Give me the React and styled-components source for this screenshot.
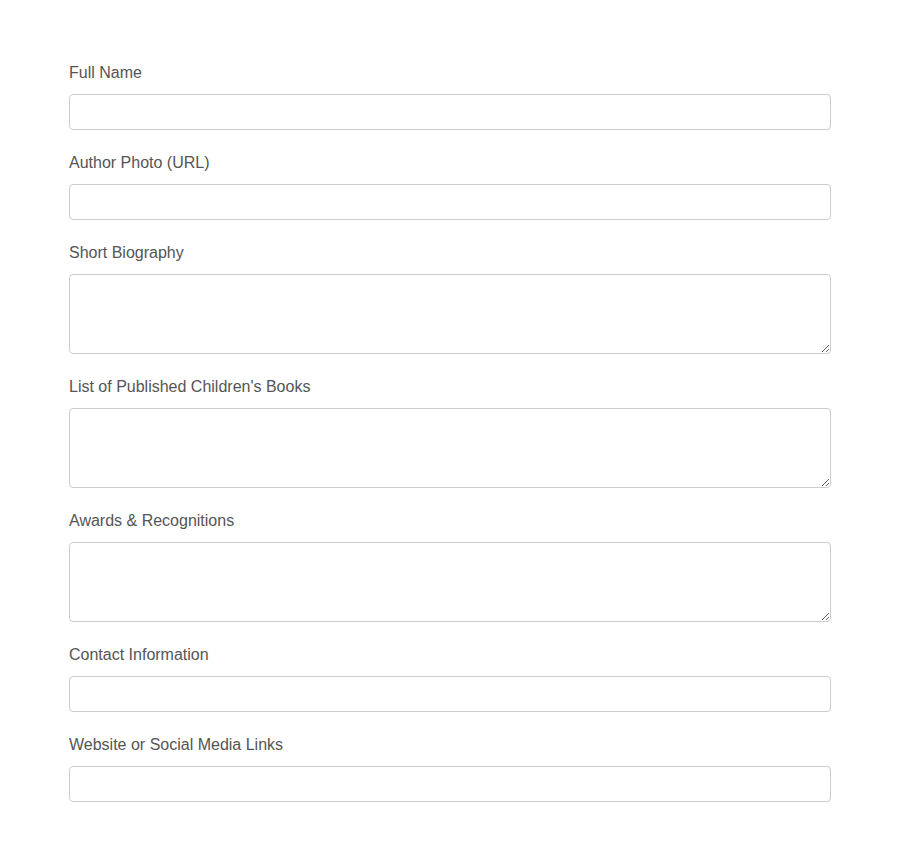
import React from 'react';
import styled, { createGlobalStyle } from 'styled-components';

const GlobalStyle = createGlobalStyle`
  body {
    margin: 0;
    background: #fff;
    font-family: "Liberation Sans", Arial, sans-serif;
  }
`;

const Form = styled.form`
  width: 762px;
  margin: 0 auto;
  padding: 64px 0 40px;
`;

const Field = styled.div`
  margin-bottom: 24px;
`;

const Label = styled.label`
  display: block;
  font-size: 16px;
  line-height: 18px;
  color: #555;
  margin-bottom: 12px;
`;

const Input = styled.input`
  display: block;
  box-sizing: border-box;
  width: 100%;
  height: 36px;
  padding: 8px 10px;
  border: 1px solid #ccc;
  border-radius: 4px;
  font-size: 16px;
  font-family: inherit;
  outline: none;
`;

const TextArea = styled.textarea`
  display: block;
  box-sizing: border-box;
  width: 100%;
  height: 80px;
  padding: 8px 10px;
  border: 1px solid #ccc;
  border-radius: 4px;
  font-size: 16px;
  font-family: inherit;
  resize: vertical;
  outline: none;
`;

const fields = [
  { id: 'name', label: 'Full Name' },
  { id: 'photo', label: 'Author Photo (URL)' },
  { id: 'bio', label: 'Short Biography', multi: true },
  { id: 'books', label: "List of Published Children's Books", multi: true },
  { id: 'awards', label: 'Awards & Recognitions', multi: true },
  { id: 'contact', label: 'Contact Information' },
  { id: 'links', label: 'Website or Social Media Links' },
];

const App = () => {
  return (
    <>
      <GlobalStyle />
      <Form>
        {fields.map((f) => (
          <Field key={f.id}>
            <Label htmlFor={f.id}>{f.label}</Label>
            {f.multi ? <TextArea id={f.id} /> : <Input id={f.id} type="text" />}
          </Field>
        ))}
      </Form>
    </>
  );
};

export default App;
